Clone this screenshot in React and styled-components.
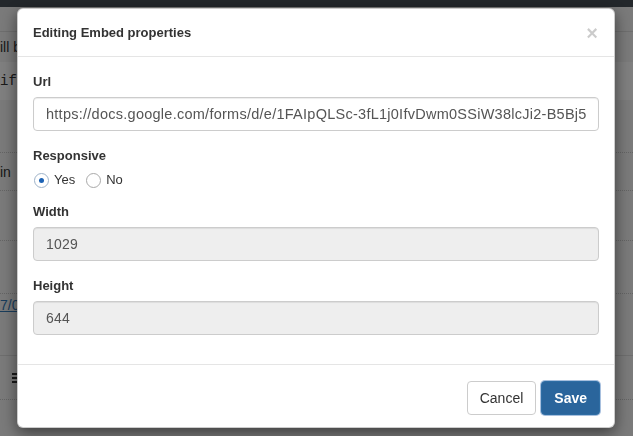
import React from "react";
import styled, { createGlobalStyle, css } from "styled-components";

const GlobalStyle = createGlobalStyle`
  html, body { margin: 0; padding: 0; }
  body {
    font-family: "Liberation Sans", Arial, sans-serif;
    font-size: 14px;
    color: #333;
    background: #f4f4f4;
    overflow: hidden;
  }
  * { box-sizing: border-box; }
`;

/* ---------- background page (behind the overlay) ---------- */
const Page = styled.div`
  height: 436px;
  overflow: hidden;
  background: #f4f4f4;
`;

const TopBar = styled.div`
  height: 7px;
  background: #464e56;
`;

const Row = styled.div`
  height: ${(p) => p.$h}px;
  display: flex;
  align-items: center;
  background: ${(p) => (p.$band ? "#ffffff" : "transparent")};
  border-bottom: ${(p) =>
    p.$line === "solid"
      ? "1px solid #dcdcdc"
      : p.$line === "dotted"
      ? "1px dotted #c8c8c8"
      : "none"};
  font-size: 14px;
  color: #333;
  white-space: nowrap;
`;

const Mono = styled.span`
  font-family: "Liberation Mono", monospace;
  font-size: 14px;
`;

const BgLink = styled.a`
  color: #337ab7;
  text-decoration: underline;
`;

const Burger = styled.span`
  display: inline-flex;
  flex-direction: column;
  gap: 2px;
  margin-left: 12px;
  & > i {
    display: block;
    width: 5px;
    height: 2px;
    background: #333;
  }
`;

/* ---------- modal ---------- */
const Overlay = styled.div`
  position: fixed;
  inset: 0;
  background: rgba(0, 0, 0, 0.5);
  padding: 8px 0 0 17px;
`;

const Dialog = styled.div`
  width: 598px;
  background: #fff;
  border: 1px solid rgba(0, 0, 0, 0.2);
  border-radius: 6px;
  box-shadow: 0 5px 15px rgba(0, 0, 0, 0.5);
  overflow: hidden;
`;

const Header = styled.div`
  display: flex;
  align-items: center;
  justify-content: space-between;
  padding: 15px 15px 14px;
  border-bottom: 1px solid #e5e5e5;
`;

const Title = styled.h4`
  margin: 0;
  font-size: 13px;
  line-height: 18px;
  font-weight: bold;
  color: #333;
`;

const Close = styled.button`
  border: 0;
  background: none;
  padding: 0;
  margin-right: 1px;
  font-family: "Liberation Sans", Arial, sans-serif;
  font-size: 20px;
  font-weight: bold;
  line-height: 18px;
  color: #000;
  opacity: 0.2;
  cursor: pointer;
`;

const Body = styled.div`
  padding: 15px 15px 14px;
`;

const Group = styled.div`
  margin-bottom: 15px;
`;

const Label = styled.label`
  display: block;
  font-size: 13px;
  font-weight: bold;
  line-height: 20px;
  margin-bottom: 5px;
  color: #333;
`;

const Input = styled.input`
  display: block;
  width: 100%;
  height: 34px;
  padding: 6px 12px;
  font-family: "Liberation Sans", Arial, sans-serif;
  font-size: ${(p) => (p.$wide ? "14.5px" : "14px")};
  line-height: 20px;
  color: #555;
  background: ${(p) => (p.disabled ? "#eeeeee" : "#fff")};
  border: 1px solid #cccccc;
  border-radius: 4px;
  box-shadow: inset 0 1px 1px rgba(0, 0, 0, 0.075);
  letter-spacing: ${(p) => (p.$wide ? "0.26px" : "0.2px")};
  outline: none;
  opacity: 1;
  -webkit-text-fill-color: #555;
`;

const RadioRow = styled.div`
  display: flex;
  align-items: center;
  height: 16px;
  margin-top: 6px;
  margin-bottom: 14px;
`;

const RadioLabel = styled.label`
  display: inline-flex;
  align-items: center;
  gap: 5px;
  margin-right: 10px;
  font-size: 13px;
  color: #333;
  line-height: 16px;
`;

const Radio = styled.input.attrs({ type: "radio" })`
  appearance: none;
  -webkit-appearance: none;
  margin: 0 0 0 1px;
  width: 15px;
  height: 15px;
  border-radius: 50%;
  border: 1px solid #a9a9a9;
  background: #fff;
  display: grid;
  place-content: center;
  &::before {
    content: "";
    width: 5px;
    height: 5px;
    border-radius: 50%;
    background: transparent;
  }
  &:checked {
    border-color: #9fb3c9;
  }
  &:checked::before {
    background: #1d63b5;
  }
`;

const Footer = styled.div`
  display: flex;
  justify-content: flex-end;
  gap: 5px;
  padding: 16px 14px 12px 15px;
  border-top: 1px solid #e5e5e5;
`;

const Button = styled.button`
  font-family: "Liberation Sans", Arial, sans-serif;
  font-size: 14px;
  line-height: 20px;
  padding: 6px 12px;
  border-radius: 4px;
  border: 1px solid #cccccc;
  background: #fff;
  color: #333;
  cursor: pointer;
  ${(p) =>
    p.$primary &&
    css`
      font-weight: bold;
      color: #fff;
      background: #2a659c;
      border-color: #2e6da4;
      box-shadow: 0 0 0 1px #a8c0de;
    `}
`;

export default function App() {
  return (
    <>
      <GlobalStyle />
      <Page>
        <TopBar />
        <Row $h={25} $line="solid" />
        <Row $h={30}>ill b</Row>
        <Row $h={38} $band>
          <Mono>ife</Mono>
        </Row>
        <Row $h={53} $line="dotted" />
        <Row $h={38} $line="dotted">in</Row>
        <Row $h={50} $line="dotted" />
        <Row $h={53} $line="dotted" />
        <Row $h={22}>
          <BgLink>7/0</BgLink>
        </Row>
        <Row $h={40} $line="solid" />
        <Row $h={44} $line="dotted">
          <Burger>
            <i />
            <i />
            <i />
          </Burger>
        </Row>
      </Page>
      <Overlay>
        <Dialog role="dialog">
          <Header>
            <Title>Editing Embed properties</Title>
            <Close aria-label="Close">×</Close>
          </Header>
          <Body>
            <Group>
              <Label>Url</Label>
              <Input
                $wide
                readOnly
                value="https://docs.google.com/forms/d/e/1FAIpQLSc-3fL1j0IfvDwm0SSiW38lcJi2-B5Bj5"
              />
            </Group>
            <Label>Responsive</Label>
            <RadioRow>
              <RadioLabel>
                <Radio name="resp" defaultChecked />
                Yes
              </RadioLabel>
              <RadioLabel>
                <Radio name="resp" />
                No
              </RadioLabel>
            </RadioRow>
            <Group>
              <Label>Width</Label>
              <Input disabled value="1029" readOnly />
            </Group>
            <Group>
              <Label>Height</Label>
              <Input disabled value="644" readOnly />
            </Group>
          </Body>
          <Footer>
            <Button>Cancel</Button>
            <Button $primary>Save</Button>
          </Footer>
        </Dialog>
      </Overlay>
    </>
  );
}
